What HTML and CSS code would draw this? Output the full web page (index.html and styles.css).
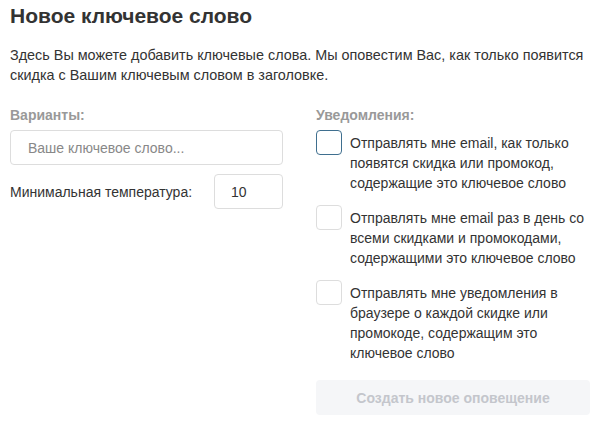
FILE: index.html
```html
<!DOCTYPE html>
<html lang="ru">
<head>
<meta charset="utf-8">
<link rel="stylesheet" href="styles.css">
</head>
<body>
<div class="page">
  <h1 class="title">Новое ключевое слово</h1>
  <p class="intro">Здесь Вы можете добавить ключевые слова. Мы оповестим Вас, как только появится скидка с Вашим ключевым словом в заголовке.</p>
  <div class="cols">
    <div class="col">
      <div class="label">Варианты:</div>
      <div class="input wide"><span class="placeholder">Ваше ключевое слово...</span></div>
      <div class="temp-row">
        <span class="temp-label">Минимальная температура:</span>
        <div class="input small">10</div>
      </div>
    </div>
    <div class="col">
      <div class="label">Уведомления:</div>
      <div class="option">
        <span class="box focus"></span>
        <span class="opt-text">Отправлять мне email, как только появятся скидка или промокод, содержащие это ключевое слово</span>
      </div>
      <div class="option">
        <span class="box"></span>
        <span class="opt-text">Отправлять мне email раз в день со всеми скидками и промокодами, содержащими это ключевое слово</span>
      </div>
      <div class="option">
        <span class="box"></span>
        <span class="opt-text">Отправлять мне уведомления в браузере о каждой скидке или промокоде, содержащим это ключевое слово</span>
      </div>
      <div class="button">Создать новое оповещение</div>
    </div>
  </div>
</div>
</body>
</html>
```
FILE: styles.css
```css
html, body {
  margin: 0;
  padding: 0;
  background: #fff;
}
.page {
  padding: 4px 10px 0 10px;
  font-family: "Liberation Sans", Arial, sans-serif;
  color: #333;
}
.title {
  margin: 0;
  font-size: 21px;
  font-weight: bold;
  line-height: 24px;
  color: #333;
}
.intro {
  margin: 17px 0 0 0;
  font-size: 14.4px;
  line-height: 20px;
}
.cols {
  display: grid;
  grid-template-columns: 273px 274px;
  column-gap: 33px;
  margin-top: 21px;
}
.label {
  font-size: 14px;
  font-weight: bold;
  color: #999;
  line-height: 18px;
}
.input {
  box-sizing: border-box;
  border: 1px solid #ddd;
  border-radius: 4px;
  height: 35px;
  display: flex;
  align-items: center;
  font-size: 14px;
  color: #333;
}
.wide {
  margin-top: 6px;
  padding-left: 17px;
}
.placeholder {
  color: #888;
}
.temp-row {
  display: flex;
  align-items: center;
  justify-content: space-between;
  margin-top: 9px;
}
.temp-label {
  font-size: 14px;
}
.small {
  width: 69px;
  padding-left: 16px;
}
.option {
  display: flex;
  align-items: flex-start;
  margin-top: 4px;
}
.option + .option {
  margin-top: 10px;
}
.box {
  flex: none;
  box-sizing: border-box;
  width: 26px;
  height: 25px;
  border: 1px solid #ddd;
  border-radius: 4px;
  margin-top: 2px;
}
.box.focus {
  border-color: #3f6f8f;
}
.opt-text {
  margin-left: 8px;
  font-size: 14px;
  line-height: 20px;
  margin-top: 5px;
}
.button {
  margin-top: 17px;
  height: 35px;
  border-radius: 4px;
  background: #f5f6f8;
  color: #c4c6cc;
  font-size: 14px;
  font-weight: bold;
  display: flex;
  align-items: center;
  justify-content: center;
}
```
